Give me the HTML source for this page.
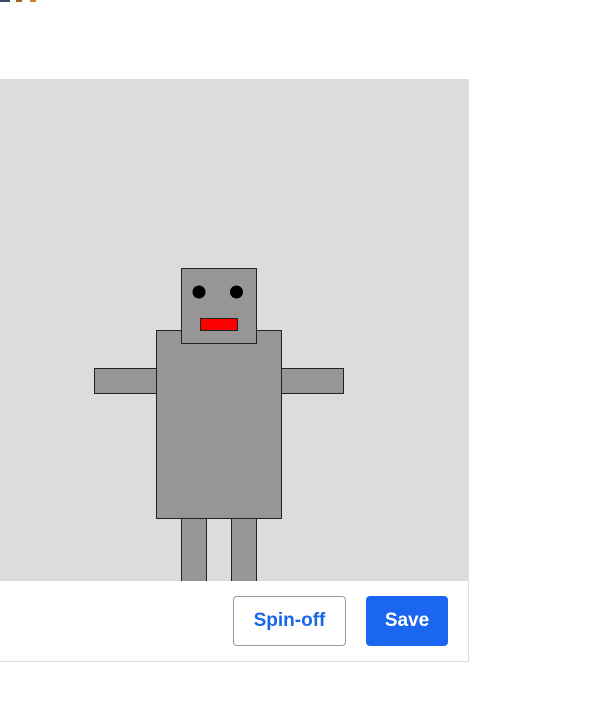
<!DOCTYPE html>
<html><head><meta charset="utf-8"><style>
html,body{margin:0;padding:0;background:#fff;width:616px;height:721px;overflow:hidden;font-family:"Liberation Sans",sans-serif}
.btn{position:absolute;top:596px;height:50px;box-sizing:border-box;border-radius:4px;font-weight:bold;font-size:19px;display:flex;align-items:center;justify-content:center}
</style></head><body>
<div style="position:absolute;left:0;top:0;width:10px;height:2px;background:#3a4a6a"></div>
<div style="position:absolute;left:16px;top:0;width:6px;height:2px;background:#a06020"></div>
<div style="position:absolute;left:30px;top:0;width:6px;height:2px;background:#d08020"></div>
<svg style="position:absolute;left:0;top:0" width="616" height="721">
<rect x="0" y="79" width="468" height="502" fill="#dcdcdc"/>
<rect x="0" y="581" width="468" height="80" fill="#fff"/>
<line x1="468.5" y1="79" x2="468.5" y2="662" stroke="#ddd"/>
<line x1="0" y1="661.5" x2="469" y2="661.5" stroke="#ddd"/>
<g fill="#969696" stroke="#222" stroke-width="1">
<rect x="94.5" y="368.5" width="62" height="25"/>
<rect x="281.5" y="368.5" width="62" height="25"/>
<rect x="181.5" y="518.5" width="25" height="70"/>
<rect x="231.5" y="518.5" width="25" height="70"/>
<rect x="156.5" y="330.5" width="125" height="188"/>
<rect x="181.5" y="268.5" width="75" height="75"/>
</g>
<rect x="0" y="581" width="468" height="80" fill="#fff"/>
<line x1="0" y1="661.5" x2="469" y2="661.5" stroke="#ddd"/>
<circle cx="199" cy="292" r="6.5" fill="#000"/>
<circle cx="236.5" cy="292" r="6.5" fill="#000"/>
<rect x="200.5" y="318.5" width="37" height="12" fill="#f00" stroke="#222"/>
</svg>
<div class="btn" style="left:233px;width:113px;border:1px solid #999;color:#1a66e8;background:#fff">Spin-off</div>
<div class="btn" style="left:366px;width:82px;background:#1a66f0;color:#fff">Save</div>
</body></html>
